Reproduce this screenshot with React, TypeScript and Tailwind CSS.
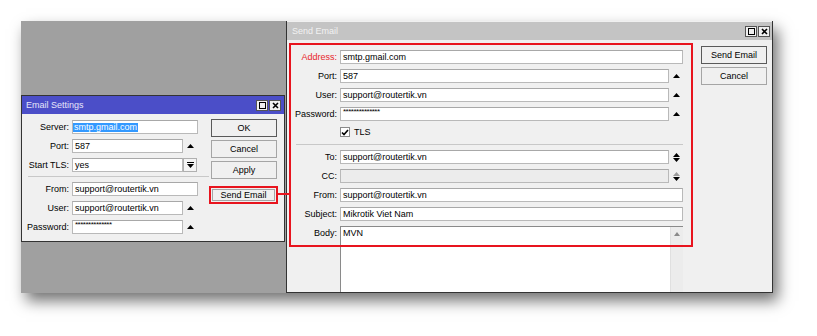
import type { ReactNode } from 'react'

const Up = ({ gray = false }: { gray?: boolean }) => (
  <svg width="7" height="4" viewBox="0 0 7 4">
    <path d="M0 4 L3.5 0 L7 4Z" fill={gray ? '#9a9a9a' : '#000'} />
  </svg>
)

const Down = () => (
  <svg width="7" height="4" viewBox="0 0 7 4">
    <path d="M0 0 L3.5 4 L7 0Z" fill="#000" />
  </svg>
)

const UpDown = ({ grayUp = false }: { grayUp?: boolean }) => (
  <div className="flex flex-col items-center gap-[1px]">
    <Up gray={grayUp} />
    <Down />
  </div>
)

const Box = ({ children, className = '', disabled = false }: { children?: ReactNode; className?: string; disabled?: boolean }) => (
  <div
    className={`flex h-[14px] items-center overflow-hidden border border-[#b9b9b9] border-t-[#a8a8a8] px-[2px] whitespace-nowrap ${disabled ? 'bg-[#ececec]' : 'bg-white'} ${className}`}
  >
    {children}
  </div>
)

const Row = ({ label, lw, red = false, children }: { label: string; lw: string; red?: boolean; children: ReactNode }) => (
  <div className="flex h-[14px] items-center">
    <span className={`shrink-0 pr-[3px] text-right ${lw} ${red ? 'text-[#e8262b]' : 'text-black'}`}>{label}</span>
    {children}
  </div>
)

const Btn = ({ children, dark = false, className = '' }: { children: ReactNode; dark?: boolean; className?: string }) => (
  <div
    className={`flex h-[18px] items-center justify-center border bg-[#f0f0f0] ${dark ? 'border-[#5a5a5a]' : 'border-[#a5a5a5]'} ${className}`}
  >
    {children}
  </div>
)

const WinButtons = () => (
  <div className="flex gap-[1px]">
    <div className="flex h-[11px] w-[12px] items-center justify-center border border-[#555] bg-[#f0f0f0]">
      <div className="h-[7px] w-[7px] border border-black" />
    </div>
    <div className="flex h-[11px] w-[12px] items-center justify-center border border-[#555] bg-[#f0f0f0]">
      <svg width="7" height="7" viewBox="0 0 7 7">
        <path d="M1 1 L6 6 M6 1 L1 6" stroke="#000" strokeWidth="1.6" />
      </svg>
    </div>
  </div>
)

const Stars = () => <span className="relative -top-[2px] text-[8px] tracking-[-0.5px]">**************</span>

const EmailSettings = () => (
  <div className="flex h-[147px] w-[264px] flex-col border border-[#333] bg-[#f0f0f0]">
    <div className="flex h-[18px] items-center justify-between bg-[#4b4ec8] pl-[4px] pr-[3px]">
      <span className="text-[#e6e6fa]">Email Settings</span>
      <WinButtons />
    </div>
    <div className="flex">
      <div className="flex w-[189px] flex-col gap-[5px] pt-[6px]">
        <Row label="Server:" lw="w-[50px]">
          <Box className="w-[126px] !px-0">
            <span className="bg-[#3399ff] px-[1px] text-white">smtp.gmail.com</span>
          </Box>
        </Row>
        <Row label="Port:" lw="w-[50px]">
          <Box className="w-[111px]">587</Box>
          <div className="flex w-[15px] justify-center">
            <Up />
          </div>
        </Row>
        <Row label="Start TLS:" lw="w-[50px]">
          <Box className="w-[111px]">yes</Box>
          <div className="flex h-[14px] w-[14px] flex-col items-center justify-center gap-[1px] border border-[#b0b0b0] bg-[#f4f4f4]">
            <div className="h-[1px] w-[7px] bg-black" />
            <Down />
          </div>
        </Row>
        <div className="ml-[6px] mr-[2px] mt-[-1px] h-[1px] bg-[#c8c8c8]" />
        <Row label="From:" lw="w-[50px]">
          <Box className="w-[126px]">support@routertik.vn</Box>
        </Row>
        <Row label="User:" lw="w-[50px]">
          <Box className="w-[111px]">support@routertik.vn</Box>
          <div className="flex w-[15px] justify-center">
            <Up />
          </div>
        </Row>
        <Row label="Password:" lw="w-[50px]">
          <Box className="w-[111px]">
            <Stars />
          </Box>
          <div className="flex w-[15px] justify-center">
            <Up />
          </div>
        </Row>
      </div>
      <div className="flex w-[66px] flex-col pt-[5px]">
        <Btn dark>OK</Btn>
        <Btn className="mt-[3px]">Cancel</Btn>
        <Btn className="mt-[3px]">Apply</Btn>
        <div className="-ml-[2px] -mr-[1px] mt-[7px] border-2 border-[#e8141e] p-[1px]">
          <div className="flex h-[12px] items-center justify-center border border-[#a5a5a5] bg-[#f0f0f0]">Send Email</div>
        </div>
      </div>
    </div>
  </div>
)

const SendEmail = () => (
  <div className="flex h-[272px] w-[487px] flex-col border border-t-0 border-[#333] bg-[#f0f0f0]">
    <div className="mt-[1px] flex h-[18px] items-center justify-between bg-[#c4c4c4] pl-[5px] pr-[2px]">
      <span className="text-[#f2f2f2]">Send Email</span>
      <WinButtons />
    </div>
    <div className="relative flex flex-1">
      <div className="flex flex-1 flex-col gap-[5px] pl-[7px] pt-[10px]">
        <Row label="Address:" lw="w-[46px]" red>
          <Box className="flex-1">smtp.gmail.com</Box>
        </Row>
        <Row label="Port:" lw="w-[46px]">
          <Box className="flex-1">587</Box>
          <div className="flex w-[14px] justify-center">
            <Up />
          </div>
        </Row>
        <Row label="User:" lw="w-[46px]">
          <Box className="flex-1">support@routertik.vn</Box>
          <div className="flex w-[14px] justify-center">
            <Up />
          </div>
        </Row>
        <Row label="Password:" lw="w-[46px]">
          <Box className="flex-1">
            <Stars />
          </Box>
          <div className="flex w-[14px] justify-center">
            <Up />
          </div>
        </Row>
        <div className="flex h-[12px] items-center pl-[46px]">
          <div className="flex h-[10px] w-[10px] items-center justify-center border border-[#8a8a8a] bg-white">
            <svg width="8" height="7" viewBox="0 0 8 7">
              <path d="M1 3.5 L3 5.5 L7 1" stroke="#000" strokeWidth="1.6" fill="none" />
            </svg>
          </div>
          <span className="ml-[4px]">TLS</span>
        </div>
        <div className="ml-[2px] mt-[1px] h-[1px] bg-[#c8c8c8]" />
        <Row label="To:" lw="w-[46px]">
          <Box className="flex-1">support@routertik.vn</Box>
          <div className="flex w-[14px] justify-center">
            <UpDown />
          </div>
        </Row>
        <Row label="CC:" lw="w-[46px]">
          <Box className="flex-1" disabled />
          <div className="flex w-[14px] justify-center">
            <UpDown grayUp />
          </div>
        </Row>
        <Row label="From:" lw="w-[46px]">
          <Box className="flex-1">support@routertik.vn</Box>
        </Row>
        <Row label="Subject:" lw="w-[46px]">
          <Box className="flex-1">Mikrotik Viet Nam</Box>
        </Row>
        <div className="flex flex-1">
          <span className="w-[46px] shrink-0 pr-[3px] text-right leading-[14px]">Body:</span>
          <div className="flex flex-1 border-l border-t border-[#8a8a8a] bg-white">
            <div className="flex-1 pl-[2px] leading-[12px]">MVN</div>
            <div className="flex w-[13px] justify-center border-l border-[#e0e0e0] bg-[#ececec] pt-[5px]">
              <svg width="6" height="4" viewBox="0 0 6 4">
                <path d="M0 4 L3 0 L6 4Z" fill="#8a8a8a" />
              </svg>
            </div>
          </div>
        </div>
      </div>
      <div className="ml-[18px] mr-[5px] flex w-[66px] flex-col pt-[6px]">
        <Btn dark>Send Email</Btn>
        <Btn className="mt-[3px]">Cancel</Btn>
      </div>
      <div className="pointer-events-none absolute left-[2px] top-[3px] h-[204px] w-[404px] border-2 border-[#e8141e]" />
    </div>
  </div>
)

export default function App() {
  return (
    <div className="relative h-[336px] w-[817px] overflow-hidden bg-white pl-[21px] pt-[21px] font-['Liberation_Sans',Arial,sans-serif] text-[9px] leading-none text-black">
      <div className="flex w-max shadow-[5px_8px_14px_rgba(0,0,0,0.55)]">
        <div className="flex h-[272px] w-[265px] flex-col bg-[#a0a0a0] pt-[74px]">
          <EmailSettings />
        </div>
        <SendEmail />
      </div>
      <div className="absolute left-[278px] top-[193px] h-[2px] w-[12px] bg-[#e8141e]" />
    </div>
  )
}
